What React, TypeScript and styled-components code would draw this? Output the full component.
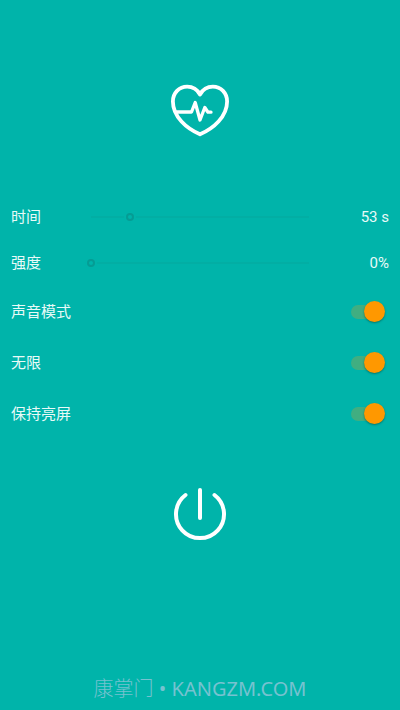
import React, { useState } from "react";
import styled, { createGlobalStyle } from "styled-components";

const BG = "#00b4aa";

const GlobalStyle = createGlobalStyle`
  * { box-sizing: border-box; }
  body {
    margin: 0;
    background: ${BG};
    font-family: Roboto, "Noto Sans CJK SC", sans-serif;
  }
`;

const Screen = styled.main`
  display: flex;
  flex-direction: column;
  min-height: 100vh;
  background: ${BG};
  color: #e8faf8;
`;

const Header = styled.header`
  display: flex;
  justify-content: center;
  padding: 84px 0 56px;

  svg {
    display: block;
  }
`;

const Settings = styled.section`
  display: flex;
  flex-direction: column;
  padding: 0 11px;
`;

const SliderRow = styled.div`
  display: grid;
  grid-template-columns: 76px 1fr 76px;
  align-items: center;
  height: 46px;
`;

const SwitchRow = styled.div`
  display: flex;
  align-items: center;
  justify-content: space-between;
  height: 51px;
`;

const Label = styled.label`
  font-size: 15px;
  line-height: 20px;
`;

const Value = styled.output`
  font-size: 15px;
  line-height: 20px;
  text-align: right;
`;

const Range = styled.input`
  appearance: none;
  width: 100%;
  height: 20px;
  margin: 0;
  background: linear-gradient(#02aea4, #02aea4) center / calc(100% - 8px) 2px no-repeat;

  &::-webkit-slider-thumb {
    appearance: none;
    width: 8px;
    height: 8px;
    border: 2px solid #059c94;
    border-radius: 50%;
    background: ${BG};
    box-shadow: 0 0 0 2px ${BG};
  }
`;

const Switch = styled.input`
  appearance: none;
  display: flex;
  align-items: center;
  width: 34px;
  height: 14px;
  margin: 0 4px 0 0;
  border-radius: 7px;
  background: #1f9f96;

  &::before {
    content: "";
    width: 21px;
    height: 21px;
    flex: none;
    border-radius: 50%;
    background: #f1f1f1;
    box-shadow: 0 1px 2px rgba(0, 60, 50, 0.5);
  }

  &:checked {
    justify-content: flex-end;
    background: #40ae81;
  }

  &:checked::before {
    background: #ff9800;
  }
`;

const PowerArea = styled.div`
  display: flex;
  justify-content: center;
  padding: 48px 0;
`;

const PowerButton = styled.button`
  padding: 0;
  border: 0;
  background: none;

  svg {
    display: block;
  }
`;

const Watermark = styled.footer`
  margin-top: auto;
  padding-bottom: 7px;
  text-align: center;
  color: #76c2d0;
  font-family: "Noto Sans", "Noto Sans CJK SC", sans-serif;
  font-weight: 400;
  font-size: 20px;
  line-height: 28px;
`;

const WatermarkName = styled.span`
  font-weight: 300;
`;

const HeartIcon = () => (
  <svg width="60" height="54" viewBox="0 0 60 54" fill="none" stroke="#fff" strokeLinecap="round" strokeLinejoin="round" aria-hidden="true">
    <path strokeWidth="3.8" d="M30 10.500C27.200 5.500 22.500 2.700 17.200 2.700C9 2.700 2.900 9 2.900 17.500C2.900 25 6 31.500 11.500 37.500C16.500 43 22.500 47 30 50.300C37.500 47 43.500 43 48.500 37.500C54 31.500 57.100 25 57.100 17.500C57.100 9 51 2.700 42.800 2.700C37.500 2.700 32.800 5.500 30 10.500Z" />
    <path strokeWidth="3.300" d="M5.500 28H21.500L25.200 18.500L30 36L34.800 23.500L38 28.200H41" />
  </svg>
);

const PowerIcon = () => (
  <svg width="54" height="54" viewBox="0 0 54 54" fill="none" stroke="#fff" strokeWidth="4" strokeLinecap="round" aria-hidden="true">
    <path d="M12.500 8A24 24 0 1 0 41.500 8" />
    <path d="M27 3V31" />
  </svg>
);

function SliderSetting(props: { id: string; label: string; initial: number; max: number; unit: string }) {
  const [value, setValue] = useState(props.initial);
  return (
    <SliderRow>
      <Label htmlFor={props.id}>{props.label}</Label>
      <Range
        id={props.id}
        type="range"
        min={0}
        max={props.max}
        value={value}
        onChange={(e) => setValue(Number(e.target.value))}
      />
      <Value htmlFor={props.id}>{`${value}${props.unit}`}</Value>
    </SliderRow>
  );
}

function SwitchSetting(props: { id: string; label: string }) {
  return (
    <SwitchRow>
      <Label htmlFor={props.id}>{props.label}</Label>
      <Switch id={props.id} type="checkbox" role="switch" defaultChecked />
    </SwitchRow>
  );
}

export default function App() {
  return (
    <>
      <GlobalStyle />
      <Screen>
        <Header>
          <HeartIcon />
        </Header>
        <Settings>
          <SliderSetting id="time" label="时间" initial={53} max={300} unit=" s" />
          <SliderSetting id="strength" label="强度" initial={0} max={100} unit="%" />
          <SwitchSetting id="sound" label="声音模式" />
          <SwitchSetting id="unlimited" label="无限" />
          <SwitchSetting id="awake" label="保持亮屏" />
        </Settings>
        <PowerArea>
          <PowerButton type="button" aria-label="电源">
            <PowerIcon />
          </PowerButton>
        </PowerArea>
        <Watermark>
          <WatermarkName>康掌门</WatermarkName> • KANGZM.COM
        </Watermark>
      </Screen>
    </>
  );
}
